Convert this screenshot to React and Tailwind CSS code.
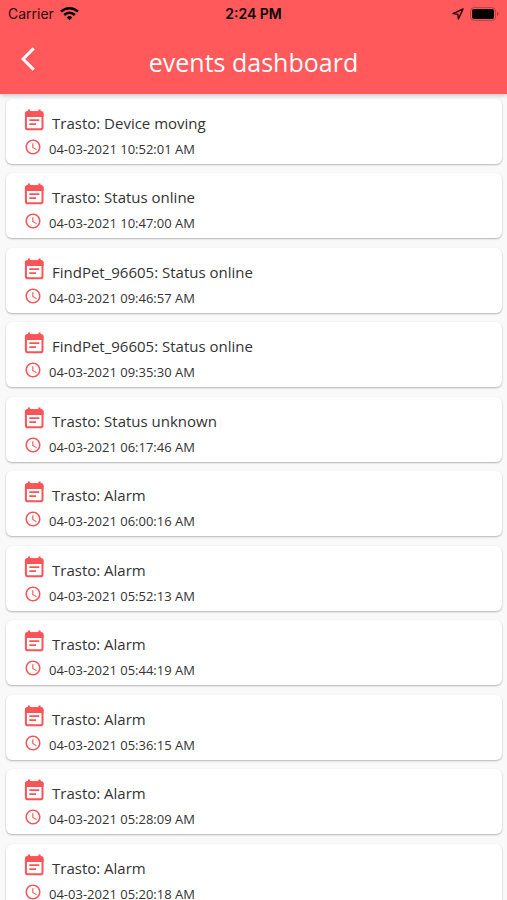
import React from 'react';
import { MdArrowBackIosNew, MdSchedule } from 'react-icons/md';

const events = [
  { title: 'Trasto: Device moving', date: '04-03-2021 10:52:01 AM' },
  { title: 'Trasto: Status online', date: '04-03-2021 10:47:00 AM' },
  { title: 'FindPet_96605: Status online', date: '04-03-2021 09:46:57 AM' },
  { title: 'FindPet_96605: Status online', date: '04-03-2021 09:35:30 AM' },
  { title: 'Trasto: Status unknown', date: '04-03-2021 06:17:46 AM' },
  { title: 'Trasto: Alarm', date: '04-03-2021 06:00:16 AM' },
  { title: 'Trasto: Alarm', date: '04-03-2021 05:52:13 AM' },
  { title: 'Trasto: Alarm', date: '04-03-2021 05:44:19 AM' },
  { title: 'Trasto: Alarm', date: '04-03-2021 05:36:15 AM' },
  { title: 'Trasto: Alarm', date: '04-03-2021 05:28:09 AM' },
  { title: 'Trasto: Alarm', date: '04-03-2021 05:20:18 AM' },
];

const StatusBar = () => (
  <div className="grid grid-cols-3 items-center h-7 px-2 font-['Inter',sans-serif] text-sm text-[#2a0c0d]">
    <div className="flex items-center gap-1.5">
      <span>Carrier</span>
      <svg className="w-[19px] h-[14px]" viewBox="0 0 19 14" fill="none" stroke="black" strokeWidth="2.5">
        <path d="M1 4.7a12.2 12.2 0 0 1 17 0" />
        <path d="M4.2 8a7.6 7.6 0 0 1 10.6 0" />
        <path d="M9.5 13.2 6.7 10.4a4 4 0 0 1 5.6 0z" fill="black" stroke="none" />
      </svg>
    </div>
    <div className="text-center font-semibold text-black">2:24 PM</div>
    <div className="flex items-center justify-end gap-1.5">
      <svg className="w-3 h-3" viewBox="0 0 12 12" fill="none" stroke="#2a0c0d" strokeWidth="1.5" strokeLinejoin="round">
        <path d="M11 1 1 5.6l4.8.6.6 4.8z" />
      </svg>
      <svg className="w-[29px] h-[14px]" viewBox="0 0 29 14" fill="none">
        <rect x=".6" y=".6" width="24.8" height="12.8" rx="3.4" stroke="#b84244" strokeWidth="1" />
        <rect x="2" y="2" width="22" height="10" rx="2" fill="black" />
        <path d="M27 4.8c1.8.6 1.8 3.8 0 4.4z" fill="#a83c3c" />
      </svg>
    </div>
  </div>
);

const EventIcon = () => (
  <svg className="size-6 -ml-0.5 shrink-0 text-[#fa5457]" viewBox="0 1 24 24" fill="none" stroke="currentColor">
    <rect x="3.9" y="4.2" width="16.6" height="17" rx="1.8" strokeWidth="2" />
    <path d="M3 9V5.2a2 2 0 0 1 2-2h14.5a2 2 0 0 1 2 2V9z" fill="currentColor" stroke="none" />
    <path d="M7 1.4v3M17.5 1.4v3" strokeWidth="2.2" />
    <path d="M7.3 12.2h10M7.3 16.1h6.8" strokeWidth="1.8" />
  </svg>
);

const EventCard = ({ title, date }) => (
  <li className="h-[65px] odd:mb-[9px] even:mb-2.5 shrink-0 rounded-md bg-white pl-[18px] pt-2 text-[#333333] shadow-[0_1px_2px_rgba(0,0,0,0.28)]">
    <div className="flex items-center gap-1.5">
      <EventIcon />
      <h2 className="pt-1 text-[15px] leading-6">{title}</h2>
    </div>
    <div className="flex items-center gap-[7px]">
      <MdSchedule className="size-[18px] text-[#fa5457]" />
      <time className="pt-1 text-[13px] leading-5">{date}</time>
    </div>
  </li>
);

const App = () => {
  return (
    <div className="flex flex-col h-screen bg-[#f9f9f9] font-['Open_Sans',sans-serif]">
      {/* Header */}
      <header className="relative z-10 shrink-0 bg-[#ff595b] shadow-[0_1px_5px_rgba(0,0,0,0.25)]">
        <StatusBar />
        <div className="grid grid-cols-[48px_1fr_48px] items-center h-[66px]">
          <button type="button" aria-label="Back" className="flex justify-center pb-1 pl-2">
            <MdArrowBackIosNew className="size-7 text-white" />
          </button>
          <h1 className="pt-1 text-center text-[25px] text-white">events dashboard</h1>
        </div>
      </header>

      {/* Events */}
      <main className="flex-1 min-h-0 overflow-y-auto [scrollbar-width:none] pl-1.5 pr-[5px] pt-[5px]">
        <ul className="flex flex-col">
          {events.map((event) => (
            <EventCard key={event.date} title={event.title} date={event.date} />
          ))}
        </ul>
      </main>
    </div>
  );
};

export default App;
